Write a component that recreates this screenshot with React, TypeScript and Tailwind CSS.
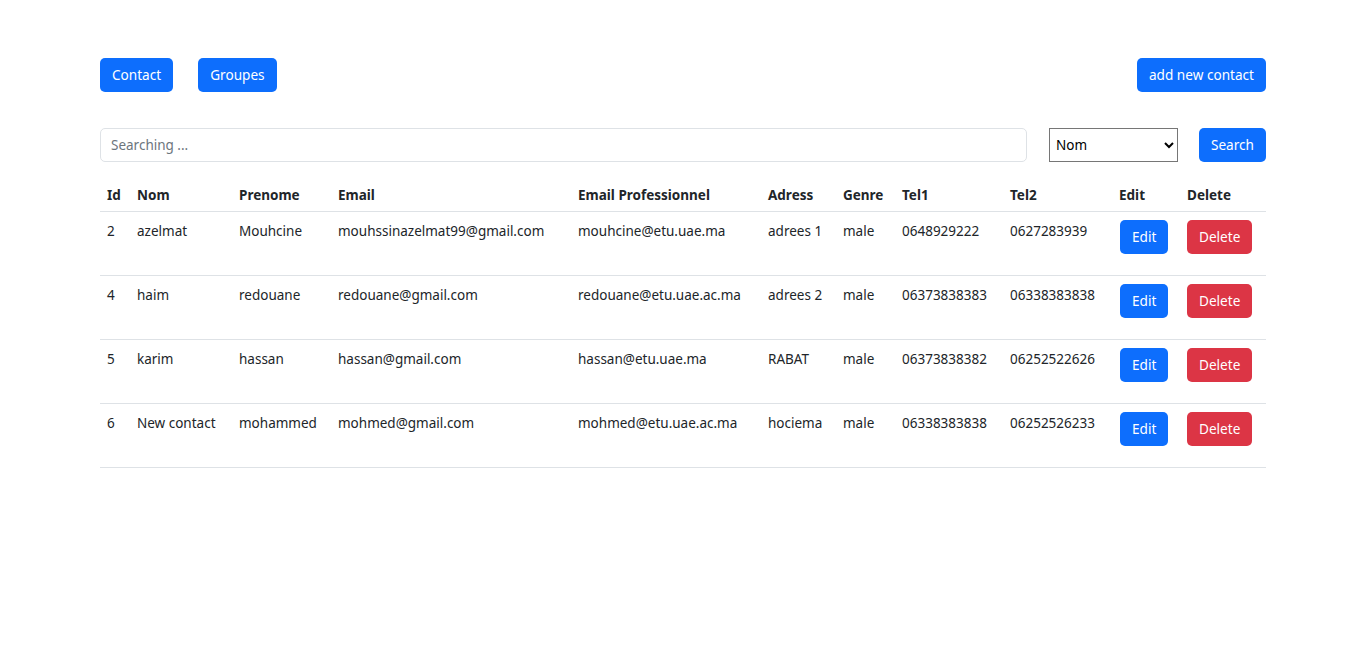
const contacts = [
  { id: 2, nom: 'azelmat', prenom: 'Mouhcine', email: 'mouhssinazelmat99@gmail.com', pro: 'mouhcine@etu.uae.ma', adress: 'adrees 1', genre: 'male', tel1: '0648929222', tel2: '0627283939' },
  { id: 4, nom: 'haim', prenom: 'redouane', email: 'redouane@gmail.com', pro: 'redouane@etu.uae.ac.ma', adress: 'adrees 2', genre: 'male', tel1: '06373838383', tel2: '06338383838' },
  { id: 5, nom: 'karim', prenom: 'hassan', email: 'hassan@gmail.com', pro: 'hassan@etu.uae.ma', adress: 'RABAT', genre: 'male', tel1: '06373838382', tel2: '06252522626' },
  { id: 6, nom: 'New contact', prenom: 'mohammed', email: 'mohmed@gmail.com', pro: 'mohmed@etu.uae.ac.ma', adress: 'hociema', genre: 'male', tel1: '06338383838', tel2: '06252526233' },
];

const headers = [
  { label: 'Id', w: 'w-[30px]' },
  { label: 'Nom', w: 'w-[102px]' },
  { label: 'Prenome', w: 'w-[99px]' },
  { label: 'Email', w: 'w-[240px]' },
  { label: 'Email Professionnel', w: 'w-[190px]' },
  { label: 'Adress', w: 'w-[75px]' },
  { label: 'Genre', w: 'w-[59px]' },
  { label: 'Tel1', w: 'w-[108px]' },
  { label: 'Tel2', w: 'w-[109px]' },
  { label: 'Edit', w: 'w-[68px]' },
  { label: 'Delete', w: 'w-[86px]' },
];

function Btn({ children, danger }: { children: React.ReactNode; danger?: boolean }) {
  return (
    <button
      className={
        'h-[34px] rounded-[5px] px-[12px] text-[13.6px] leading-none text-white ' +
        (danger ? 'bg-[#dc3545]' : 'bg-[#0d6efd]')
      }
    >
      {children}
    </button>
  );
}

export default function App() {
  return (
    <div
      className="min-h-screen bg-white text-[13.5px] text-[#212529]"
      style={{ fontFamily: '"Segoe UI", "Noto Sans", "Open Sans", sans-serif' }}
    >
      <div className="mx-auto w-[1166px] pt-[58px]">
        <div className="flex items-center justify-between">
          <div className="flex gap-[25px]">
            <Btn>Contact</Btn>
            <Btn>Groupes</Btn>
          </div>
          <Btn>add new contact</Btn>
        </div>

        <div className="mt-[36px] flex items-center">
          <input
            placeholder="Searching ..."
            className="h-[34px] flex-1 rounded-[5px] border border-[#dee2e6] px-[10px] text-[13.5px] placeholder:text-[#6c757d] outline-none"
          />
          <select className="ml-[22px] h-[34px] w-[129px] border border-[#767676] bg-white pl-[2px] text-[13.5px] text-black">
            <option>Nom</option>
            <option>Prenome</option>
          </select>
          <div className="ml-[21px]">
            <Btn>Search</Btn>
          </div>
        </div>

        <table className="mt-[13px] w-full table-fixed border-collapse text-left">
          <thead>
            <tr className="border-b border-[#dee2e6]">
              {headers.map((h) => (
                <th key={h.label} className={h.w + ' px-[7px] pt-[9px] pb-[5px] font-bold leading-[22px]'}>
                  {h.label}
                </th>
              ))}
            </tr>
          </thead>
          <tbody>
            {contacts.map((c) => (
              <tr key={c.id} className="h-[64px] border-b border-[#dee2e6] align-top leading-[22px]">
                <td className="px-[7px] pt-[8px]">{c.id}</td>
                <td className="px-[7px] pt-[8px]">{c.nom}</td>
                <td className="px-[7px] pt-[8px]">{c.prenom}</td>
                <td className="px-[7px] pt-[8px]">{c.email}</td>
                <td className="px-[7px] pt-[8px]">{c.pro}</td>
                <td className="px-[7px] pt-[8px]">{c.adress}</td>
                <td className="px-[7px] pt-[8px]">{c.genre}</td>
                <td className="px-[7px] pt-[8px]">{c.tel1}</td>
                <td className="px-[7px] pt-[8px]">{c.tel2}</td>
                <td className="px-[8px] pt-[8px]">
                  <Btn>Edit</Btn>
                </td>
                <td className="px-[7px] pt-[8px]">
                  <Btn danger>Delete</Btn>
                </td>
              </tr>
            ))}
          </tbody>
        </table>
      </div>
    </div>
  );
}
